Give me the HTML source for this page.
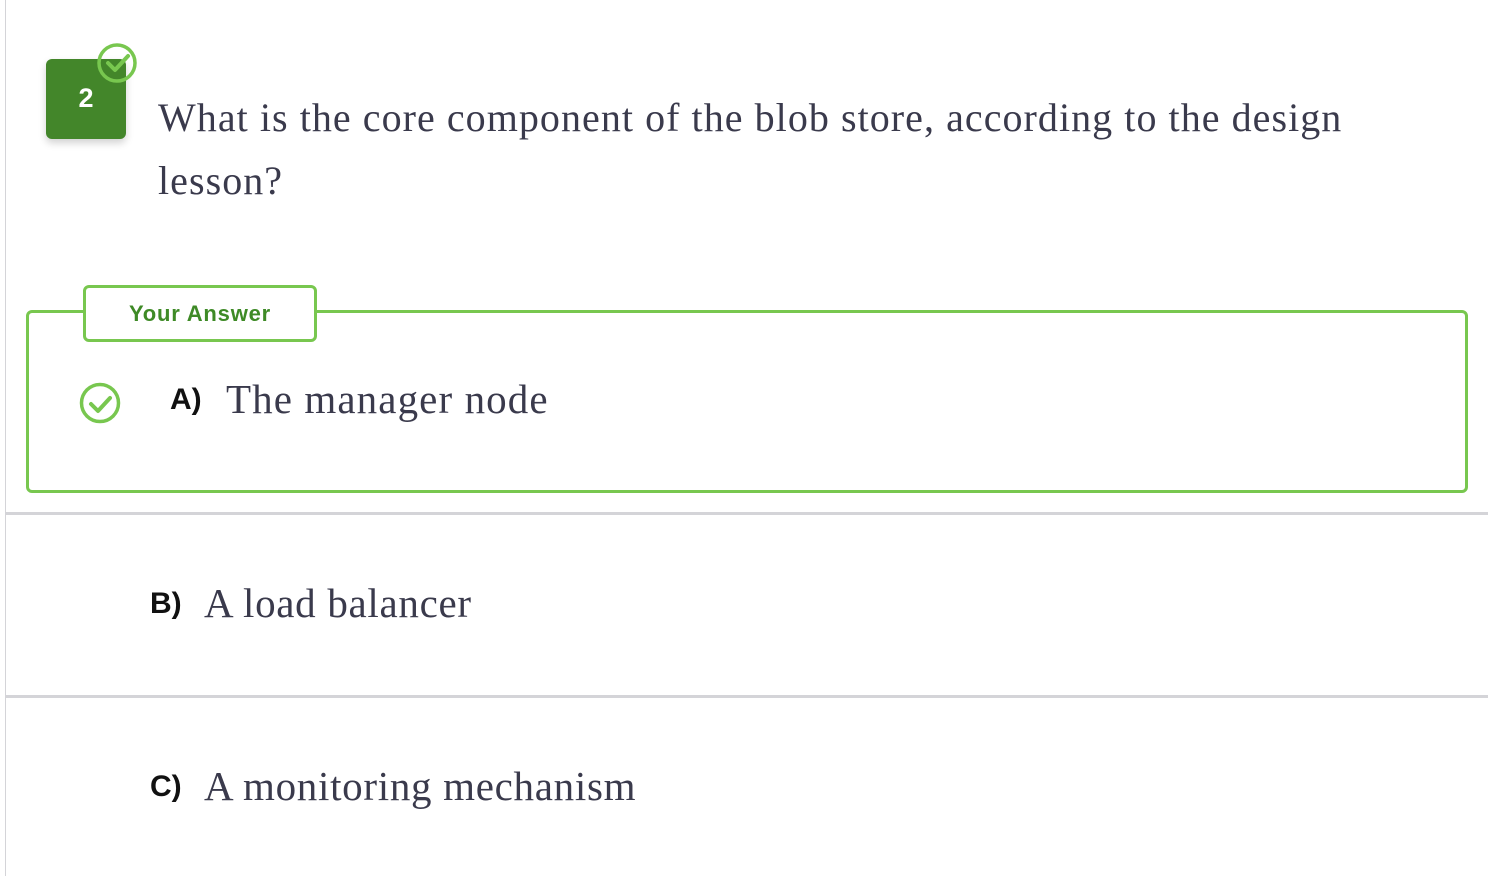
<!DOCTYPE html>
<html><head><style>
body{margin:0;width:1488px;height:876px;background:#fff;position:relative;overflow:hidden;font-family:"Liberation Sans",sans-serif}
.lb{position:absolute;left:5px;top:0;width:1px;height:876px;background:#d4d4d8}
.num{position:absolute;left:46px;top:59px;width:80px;height:80px;background:#43862a;border-radius:6px;box-shadow:0 4px 8px rgba(0,0,0,.18);color:#fff;font-weight:bold;font-size:27px;text-align:center;line-height:78px}
.q{position:absolute;left:158px;top:86px;width:1300px;font-family:"Liberation Serif",serif;font-size:40px;line-height:63px;color:#3a3a4c;letter-spacing:1.05px;white-space:nowrap}
.box{position:absolute;left:26px;top:310px;width:1436px;height:177px;border:3px solid #78c74f;border-radius:6px}
.tag{position:absolute;left:83px;top:285px;width:228px;height:51px;border:3px solid #78c74f;border-radius:6px;background:#fff;color:#3e8a26;font-weight:bold;font-size:22px;text-align:center;line-height:51px;letter-spacing:.8px}
.sep{position:absolute;left:6px;width:1482px;height:3px;background:#d4d4d8}
.lab{position:absolute;font-weight:bold;font-size:30px;color:#111}
.opt{position:absolute;font-family:"Liberation Serif",serif;font-size:41px;letter-spacing:0.7px;color:#3a3a4c}
</style></head><body>
<div class="lb"></div>
<div class="num">2</div>
<svg style="position:absolute;left:96px;top:42px" width="44" height="42" viewBox="0 0 44 42"><circle cx="21" cy="21" r="18" fill="none" stroke="#78c74f" stroke-width="3.5"/><path d="M12 21l7 7 13-14" fill="none" stroke="#78c74f" stroke-width="4" stroke-linecap="round" stroke-linejoin="round"/></svg>
<div class="q">What is the core component of the blob store, according to the design<br>lesson?</div>
<div class="box"></div>
<div class="tag">Your Answer</div>
<svg style="position:absolute;left:78px;top:381px" width="44" height="44" viewBox="0 0 44 44"><circle cx="22" cy="22" r="18.5" fill="none" stroke="#78c74f" stroke-width="3.5"/><path d="M13 23l7 7 12-13" fill="none" stroke="#78c74f" stroke-width="4" stroke-linecap="round" stroke-linejoin="round"/></svg>
<div class="lab" style="left:170px;top:383px">A)</div>
<div class="opt" style="left:226px;top:375px;letter-spacing:1.1px">The manager node</div>
<div class="sep" style="top:512px"></div>
<div class="lab" style="left:150px;top:587px">B)</div>
<div class="opt" style="left:204px;top:579px">A load balancer</div>
<div class="sep" style="top:695px"></div>
<div class="lab" style="left:150px;top:770px">C)</div>
<div class="opt" style="left:204px;top:762px">A monitoring mechanism</div>
</body></html>
